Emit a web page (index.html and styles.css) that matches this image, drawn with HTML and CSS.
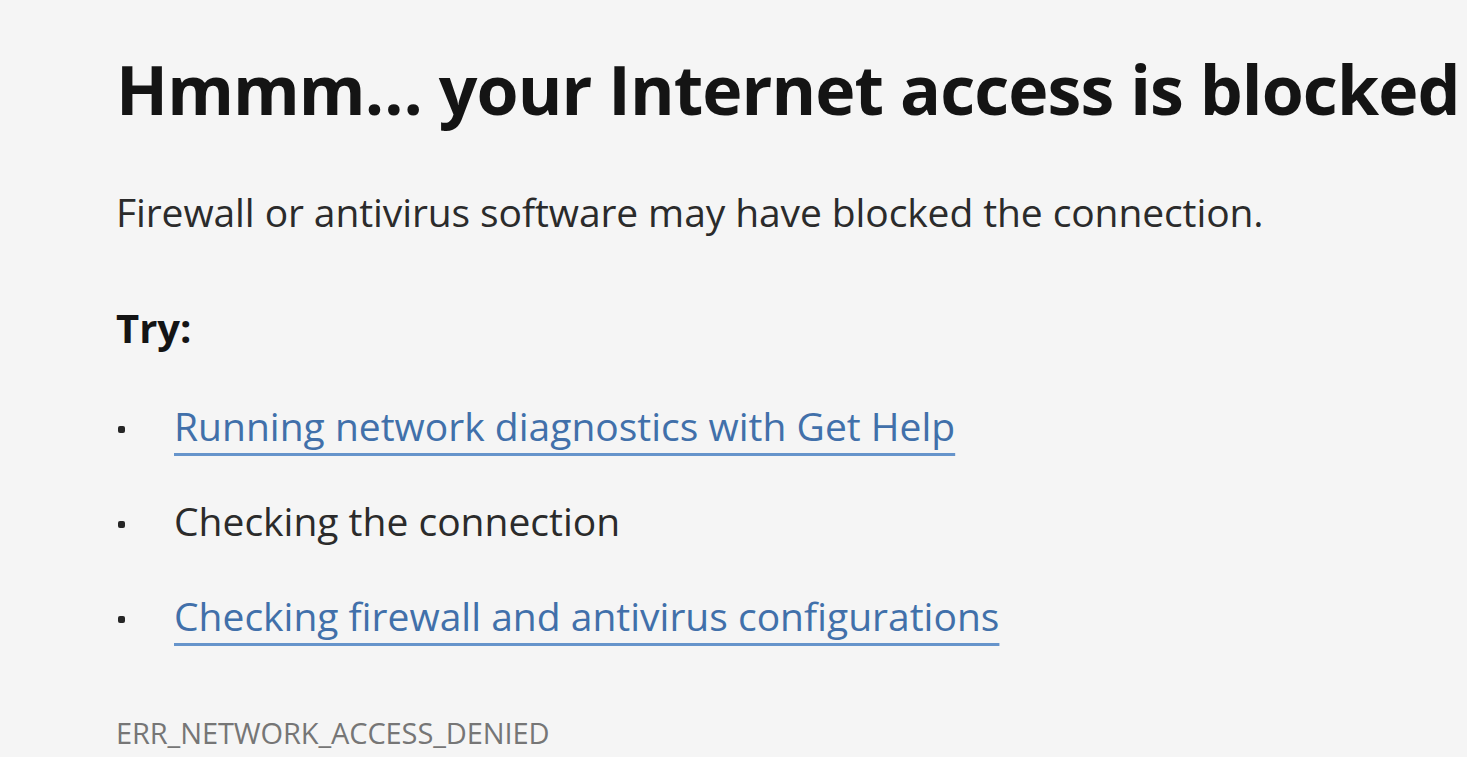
FILE: index.html
```html
<!DOCTYPE html>
<html lang="en">
<head>
<meta charset="utf-8">
<title>Can't reach this page</title>
<link rel="stylesheet" href="styles.css">
</head>
<body>
<main class="page">
  <h1 class="title">Hmmm… your Internet access is blocked</h1>
  <p class="desc">Firewall or antivirus software may have blocked the connection.</p>
  <h2 class="try">Try:</h2>
  <ul class="suggestions">
    <li><a class="link" href="#">Running network diagnostics with Get Help</a></li>
    <li><span>Checking the connection</span></li>
    <li><a class="link" href="#">Checking firewall and antivirus configurations</a></li>
  </ul>
  <div class="code">ERR_NETWORK_ACCESS_DENIED</div>
</main>
</body>
</html>
```
FILE: styles.css
```css
html, body {
  margin: 0;
  padding: 0;
  background: #f5f5f5;
  height: 100%;
  overflow: hidden;
}
body {
  font-family: "Open Sans", "Noto Sans", sans-serif;
  color: #1b1b1b;
}
.page {
  padding: 49px 0 0 116px;
  display: flex;
  flex-direction: column;
  align-items: flex-start;
}
.title {
  margin: 0;
  font-size: 68px;
  font-weight: 700;
  line-height: 80px;
  white-space: nowrap;
  letter-spacing: -0.9px;
  color: #141414;
}
.desc {
  margin: 58px 0 0;
  font-size: 39px;
  line-height: 50px;
  letter-spacing: -0.1px;
  color: #2b2b2b;
  white-space: nowrap;
}
.try {
  margin: 66px 0 0;
  font-size: 40px;
  font-weight: 700;
  line-height: 50px;
  color: #141414;
}
.suggestions {
  margin: 48px 0 0;
  padding: 0;
  list-style: none;
  display: flex;
  flex-direction: column;
  gap: 45px;
}
.suggestions li {
  display: flex;
  align-items: center;
  font-size: 39px;
  line-height: 50px;
  height: 50px;
  white-space: nowrap;
  color: #2b2b2b;
}
.suggestions li::before {
  content: "";
  flex: none;
  width: 7px;
  height: 7px;
  background: #262626;
  border-radius: 2px;
  margin: 6px 49px 0 2px;
}
.link {
  color: #4170aa;
  text-decoration: underline;
  text-decoration-color: #6694cb;
  text-decoration-thickness: 3px;
  text-underline-offset: 12px;
  text-decoration-skip-ink: none;
}
.code {
  margin: 74px 0 0;
  font-size: 29px;
  line-height: 36px;
  letter-spacing: -0.1px;
  color: #767676;
  white-space: nowrap;
}
```
